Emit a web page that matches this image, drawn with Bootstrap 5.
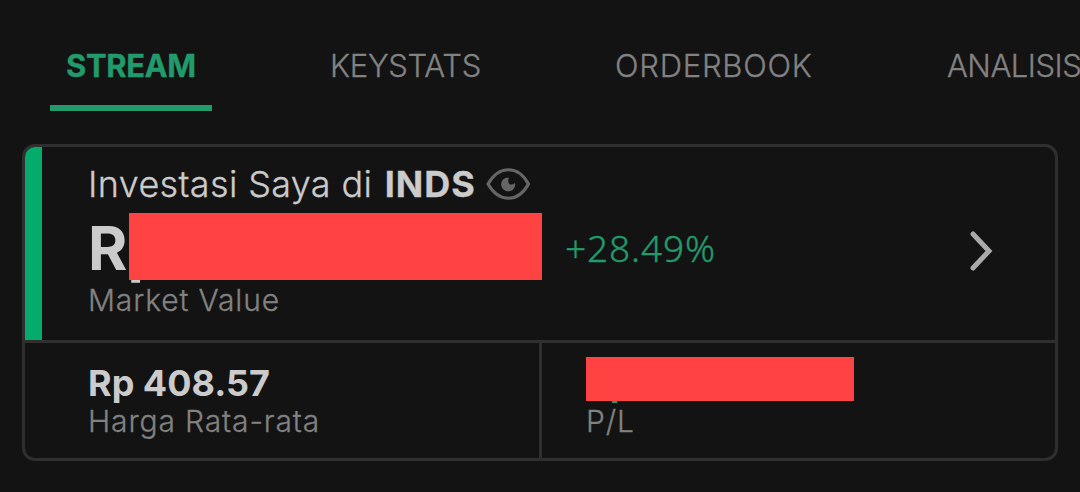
<!DOCTYPE html>
<html lang="id">
<head>
<meta charset="utf-8">
<meta name="viewport" content="width=device-width, initial-scale=1">
<title>INDS</title>
<link href="https://cdn.jsdelivr.net/npm/bootstrap@5.3.0/dist/css/bootstrap.min.css" rel="stylesheet">
<style>
  body { background: #131313; color: #cbcbcb; font-family: Inter, "Liberation Sans", sans-serif; height: 492px; overflow: hidden; white-space: nowrap; }
  .tabs { height: 144px; padding-left: 50px; gap: 103px; overflow: hidden; }
  .tabs .nav-link { flex: none; height: 111px; padding: 46px 0 0 15px; border-bottom: 6px solid transparent; color: #828282; font-size: 31px; line-height: 40px; font-weight: 300; letter-spacing: -.5px; -webkit-text-stroke: .3px; }
  .tabs .nav-link.active { color: #219b6b; border-color: #219b6b; font-weight: 700; padding-left: 16px; letter-spacing: -.4px; }
  .t-stream { width: 162px; }
  .tabs .t-keys { width: 182px; letter-spacing: -.3px; }
  .tabs .t-order { width: 229px; letter-spacing: .75px; }
  .holding { width: 1036px; height: 317px; margin-left: 22px; border: 3px solid #2f2f2f; border-radius: 13px; background: transparent; color: inherit; overflow: hidden; }
  .summary { height: 193px; border-bottom: 0; }
  .accent { width: 17px; background: #04ab6c; }
  .info { padding: 17px 0 0 46px; }
  .title-line { font-size: 36px; line-height: 40px; font-weight: 300; height: 40px; letter-spacing: .35px; -webkit-text-stroke: .3px; }
  .title-line b { font-weight: 700; letter-spacing: 1px; margin-left: 2px; }
  .title-line svg { margin-left: 9px; }
  .amount { width: 454px; height: 76px; font-size: 60px; line-height: 88px; font-weight: 700; }
  .redact { background: #ff4343; }
  .redact-main { left: 41px; top: 9px; width: 413px; height: 67px; }
  .redact-pl { left: 0; top: -3px; width: 268px; height: 44px; }
  .gain { height: 76px; font-size: 37px; font-weight: 300; color: #219b6b; line-height: 87px; margin-left: 23px; letter-spacing: .9px; font-family: "Noto Sans", sans-serif; -webkit-text-stroke: .4px; }
  .caption-text { font-size: 30px; line-height: 40px; font-weight: 300; color: #828282; letter-spacing: .85px; -webkit-text-stroke: .3px; }
  .details { height: 118px; border-top: 3px solid #2f2f2f; }
  .avg { width: 517px; padding: 20px 0 0 63px; border-right: 3px solid #2f2f2f; }
  .pl { padding: 17px 0 0 44px; }
  .value { font-size: 36px; line-height: 40px; font-weight: 700; height: 38px; }
  .pl .value { height: 41px; line-height: 46px; color: #219b6b; }
  .chev { margin-right: 58px; margin-top: 15px; }
</style>
</head>
<body>
<nav class="nav tabs flex-nowrap">
  <a class="nav-link active t-stream">STREAM</a>
  <a class="nav-link t-keys">KEYSTATS</a>
  <a class="nav-link t-order">ORDERBOOK</a>
  <a class="nav-link">ANALISIS</a>
</nav>
<main class="card holding">
  <section class="summary d-flex">
    <div class="accent"></div>
    <div class="info flex-grow-1">
      <div class="title-line d-flex align-items-center">
        <span>Investasi Saya di <b>INDS</b></span>
        <svg width="46" height="36" viewBox="0 0 46 36" fill="none"><path d="M3 18C14 -1 33 -1 43.500 18C33 37 14 37 3 18Z" stroke="#666" stroke-width="3.200" stroke-linejoin="round"/><path d="M22.500 11.500A7 7 0 1 0 30 17Q28 19 25 18.500Q22 16 24 12Z" fill="#666"/></svg>
      </div>
      <div class="d-flex">
        <div class="amount position-relative">Rp<div class="redact redact-main position-absolute"></div></div>
        <div class="gain">+28.49%</div>
      </div>
      <div class="caption-text">Market Value</div>
    </div>
    <svg class="chev align-self-center" width="30" height="44" viewBox="0 0 30 44" fill="none"><path d="M6 5L22 22L6 39" stroke="#aaa" stroke-width="5" stroke-linecap="round"/></svg>
  </section>
  <section class="details d-flex">
    <div class="avg">
      <div class="value">Rp 408.57</div>
      <div class="caption-text">Harga Rata-rata</div>
    </div>
    <div class="pl">
      <div class="value position-relative">Rp<div class="redact redact-pl position-absolute"></div></div>
      <div class="caption-text">P/L</div>
    </div>
  </section>
</main>
<script src="https://cdn.jsdelivr.net/npm/bootstrap@5.3.0/dist/js/bootstrap.bundle.min.js"></script>
</body>
</html>
